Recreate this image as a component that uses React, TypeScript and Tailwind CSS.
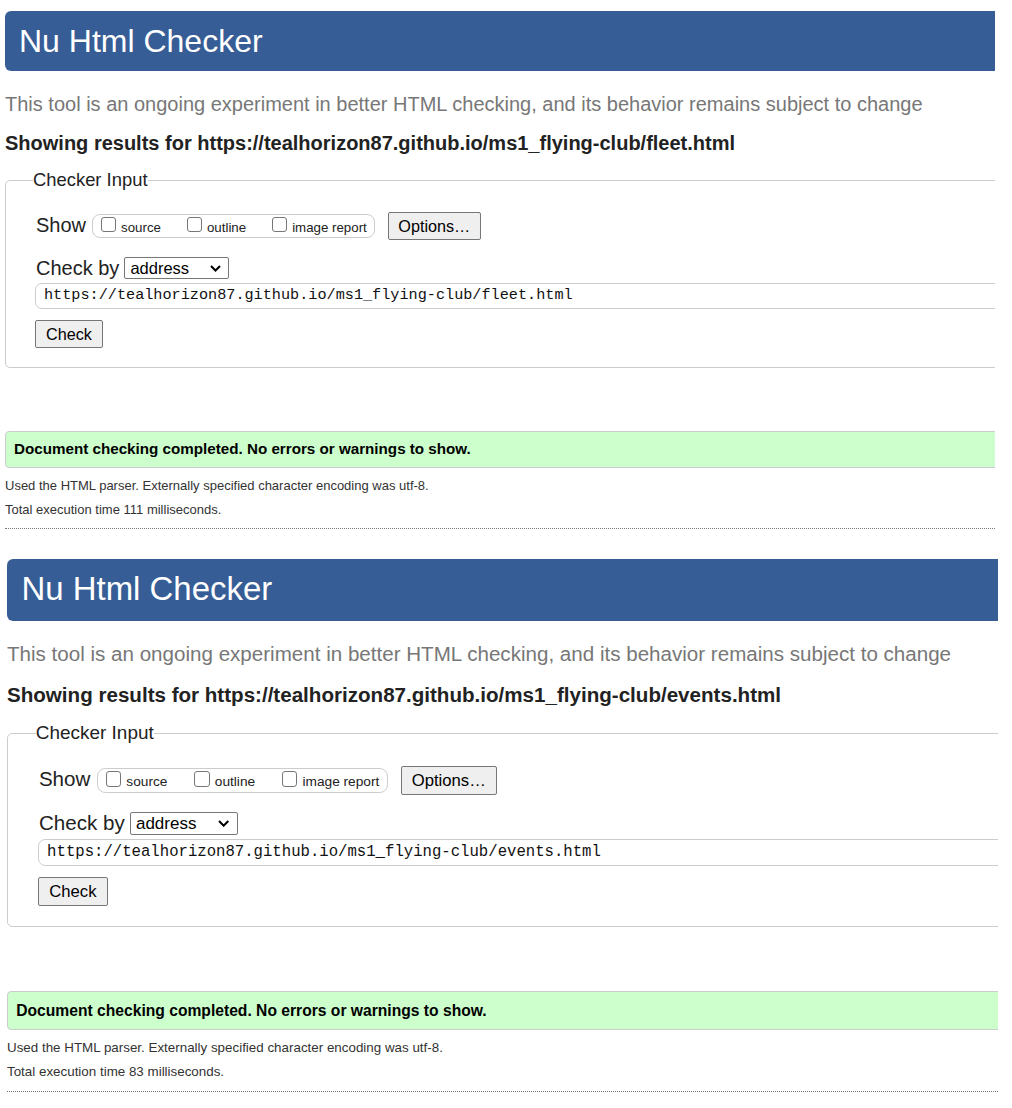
import React from "react";

type PanelProps = {
  url: string;
  time: number;
};

const CheckBox = ({ label }: { label: string }) => (
  <div className="flex items-center">
    <span className="w-[15px] h-[15px] mb-[3px] border border-[#767676] rounded-[3px] bg-white" />
    <span className="ml-[5px] text-[13.3px] text-[#222] leading-none pt-[3px]">{label}</span>
  </div>
);

const Panel = ({ url, time }: PanelProps) => {
  return (
    <div className="w-[1100px]">
      <div className="h-[60px] bg-[#365d95] rounded-l-[6px] pl-[14px] flex items-center">
        <h1 className="text-white text-[32px] leading-none">Nu Html Checker</h1>
      </div>

      <p className="mt-[21px] leading-[24px] text-[20px] text-[#777]">
        This tool is an ongoing experiment in better HTML checking, and its behavior remains subject to change
      </p>
      <p className="mt-[16px] leading-[22px] text-[20px] font-bold text-[#222]">
        Showing results for {url}
      </p>

      <fieldset className="mt-[15px] border border-[#ccc] rounded-[5px] pl-[30px] pb-[19px]">
        <legend className="-ml-[3px] text-[18.4px] leading-[22px] text-[#222]">Checker Input</legend>

        <div className="mt-[21px] h-[28px] flex items-center">
          <span className="text-[20px] text-[#222] leading-none -mt-[3px]">Show</span>
          <div className="ml-[6px] h-[24px] border border-[#ccc] rounded-[8px] pl-[8px] pr-[7px] flex items-center gap-[26px]">
            <CheckBox label="source" />
            <CheckBox label="outline" />
            <CheckBox label="image report" />
          </div>
          <button className="ml-[13px] h-[28px] w-[93px] bg-[#efefef] border border-[#767676] rounded-[2px] text-[16.2px] text-black">
            Options…
          </button>
        </div>

        <div className="mt-[17px] h-[22px] flex items-center">
          <span className="text-[20px] text-[#222] leading-none">Check by</span>
          <div className="ml-[5px] w-[105px] h-[22px] border border-[#767676] rounded-[2px] bg-white flex items-center justify-between pl-[5px] pr-[7px]">
            <span className="text-[16.5px] text-black leading-none">address</span>
            <svg width="11" height="7" viewBox="0 0 11 7" fill="none">
              <path d="M1 1l4.5 4.5L10 1" stroke="#000" strokeWidth="2" />
            </svg>
          </div>
        </div>

        <div className="mt-[4px] -ml-[1px] h-[26px] border border-[#ccc] rounded-l-[7px] flex items-center pl-[8px]">
          <span className="font-['Liberation_Mono',monospace] text-[15.2px] text-[#111] leading-none">{url}</span>
        </div>

        <button className="mt-[11px] -ml-[1px] block h-[28px] w-[68px] bg-[#efefef] border border-[#767676] rounded-[2px] text-[16.2px] text-black">
          Check
        </button>
      </fieldset>

      <div className="mt-[63px] h-[37px] bg-[#ccffcc] border border-[#ccc] rounded-l-[4px] flex items-center pl-[8px]">
        <span className="font-bold text-[15.2px] text-black">Document checking completed. No errors or warnings to show.</span>
      </div>

      <div className="mt-[6px] pb-[6px] border-b border-dotted border-[#777]">
        <p className="leading-[24px] text-[13px] text-[#333]">
          Used the HTML parser. Externally specified character encoding was utf-8.
        </p>
        <p className="leading-[24px] text-[13px] text-[#333]">Total execution time {time} milliseconds.</p>
      </div>
    </div>
  );
};

export default function App() {
  return (
    <div className="w-[1012px] h-[1108px] bg-white overflow-hidden font-['Liberation_Sans',Arial,sans-serif]">
      <div className="pt-[11px] ml-[5px] w-[990px] overflow-hidden">
        <Panel url="https://tealhorizon87.github.io/ms1_flying-club/fleet.html" time={111} />
      </div>
      <div className="mt-[30px] ml-[7px] w-[991px] overflow-hidden">
        <div className="[zoom:1.03]">
          <Panel url="https://tealhorizon87.github.io/ms1_flying-club/events.html" time={83} />
        </div>
      </div>
    </div>
  );
}
